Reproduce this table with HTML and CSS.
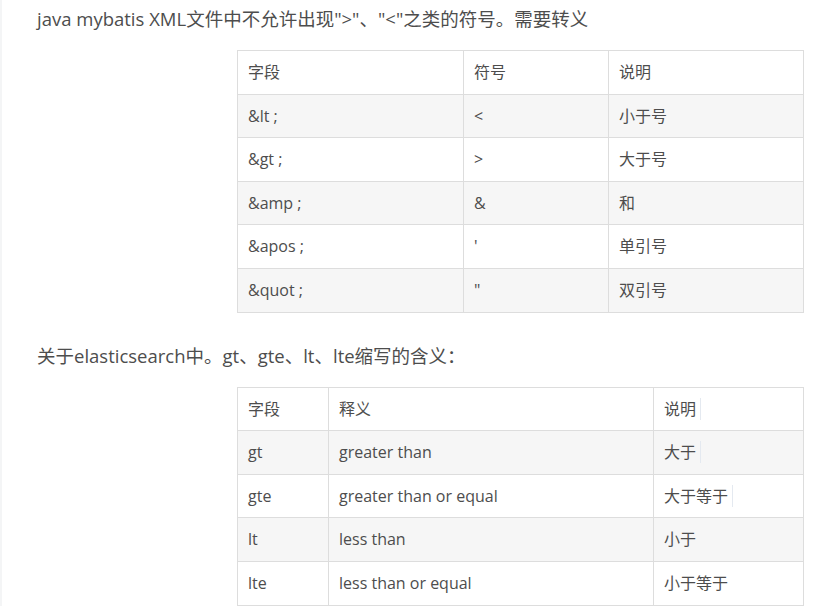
FILE: index.html
```html
<!DOCTYPE html>
<html lang="zh">
<head>
<meta charset="utf-8">
<link rel="stylesheet" href="styles.css">
</head>
<body>
<div class="page">
  <p class="para first">java mybatis XML文件中不允许出现"&gt;"、"&lt;"之类的符号。需要转义</p>
  <table class="tbl t1">
    <colgroup><col class="c1a"><col class="c1b"><col class="c1c"></colgroup>
    <tbody>
      <tr class="head"><td>字段</td><td>符号</td><td>说明</td></tr>
      <tr class="odd"><td>&amp;lt ;</td><td>&lt;</td><td>小于号</td></tr>
      <tr><td>&amp;gt ;</td><td>&gt;</td><td>大于号</td></tr>
      <tr class="odd"><td>&amp;amp ;</td><td>&amp;</td><td>和</td></tr>
      <tr><td>&amp;apos ;</td><td>'</td><td>单引号</td></tr>
      <tr class="odd"><td>&amp;quot ;</td><td>"</td><td>双引号</td></tr>
    </tbody>
  </table>
  <p class="para second">关于elasticsearch中。gt、gte、lt、lte缩写的含义：</p>
  <table class="tbl t2">
    <colgroup><col class="c2a"><col class="c2b"><col class="c2c"></colgroup>
    <tbody>
      <tr class="head"><td>字段</td><td>释义</td><td><span class="mark">说明</span></td></tr>
      <tr class="odd"><td>gt</td><td>greater than</td><td><span class="mark">大于</span></td></tr>
      <tr><td>gte</td><td>greater than or equal</td><td><span class="mark">大于等于</span></td></tr>
      <tr class="odd"><td>lt</td><td>less than</td><td>小于</td></tr>
      <tr><td>lte</td><td>less than or equal</td><td>小于等于</td></tr>
    </tbody>
  </table>
</div>
</body>
</html>
```

FILE: styles.css
```css
html, body {
  margin: 0;
  padding: 0;
  background: #ffffff;
}
body {
  font-family: "Open Sans", "Noto Sans CJK SC", sans-serif;
  color: #4d4d4d;
}
.page {
  border-left: 2px solid #f4f5f6;
  padding: 6px 0 0 35px;
  width: 785px;
}
.para {
  margin: 0;
  font-size: 18.5px;
  line-height: 26px;
}
.first {
  margin-bottom: 18px;
}
.second {
  margin-top: 30px;
  margin-bottom: 18px;
}
.tbl {
  margin-left: 200px;
  border-collapse: collapse;
  table-layout: fixed;
  width: 566px;
  font-size: 16px;
}
.tbl td {
  border: 1px solid #dddddd;
  padding: 9px 10px 9px 10px;
  line-height: 24.6px;
  height: 24.6px;
  white-space: nowrap;
  vertical-align: middle;
}
.tbl tr.odd td {
  background: #f6f6f6;
}
.c1a { width: 226px; }
.c1b { width: 145px; }
.c1c { width: 195px; }
.c2a { width: 91px; }
.c2b { width: 325px; }
.c2c { width: 150px; }
.mark {
  border-right: 1px solid #e4e9f0;
  padding-right: 4px;
}
```
